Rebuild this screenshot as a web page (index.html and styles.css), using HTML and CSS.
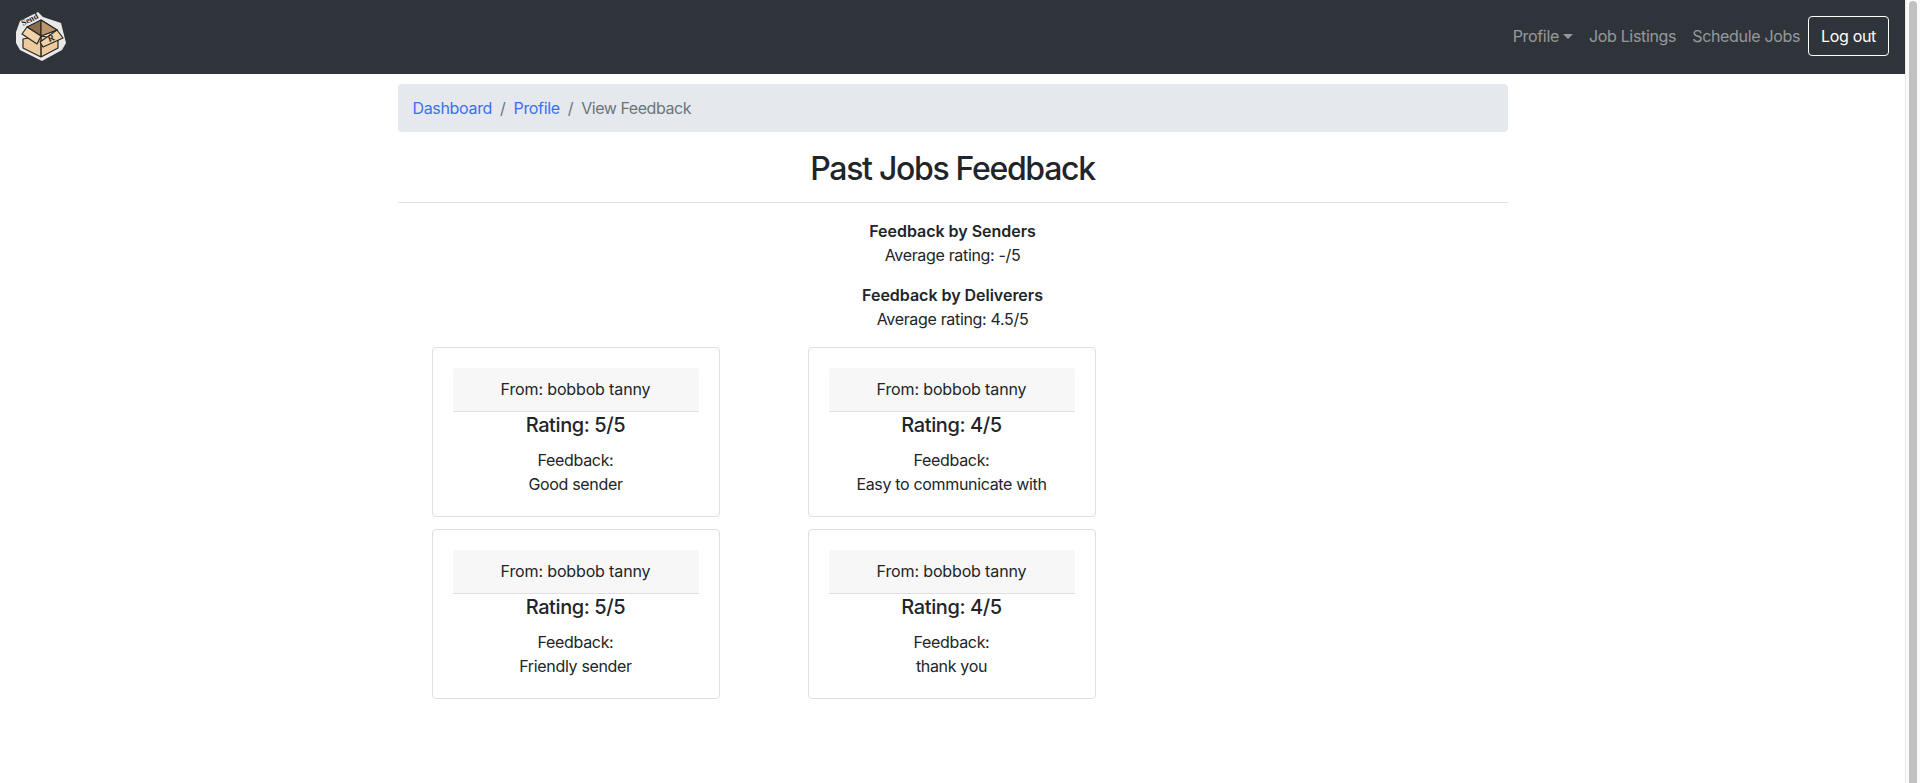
FILE: index.html
```html
<!DOCTYPE html>
<html lang="en">
<head>
<meta charset="utf-8">
<title>Past Jobs Feedback</title>
<link rel="stylesheet" href="styles.css">
</head>
<body>
<nav class="navbar">
  <a class="brand" href="#">
    <svg class="logo" viewBox="16 9 50 54" width="50" height="54" aria-hidden="true">
      <path d="M16 32 L20 21 L38 12 L43 17 L61 23 L66 43 L62 50 L42 61 L20 50 L16 43 Z" fill="#e9e9e9"/>
      <path d="M27 27 L41 20 L57 30 L41 36 Z" fill="#8a6c4a" stroke="#2a2522" stroke-width="1.2" stroke-linejoin="round"/>
      <path d="M41 20 L41 36" fill="none" stroke="#2a2522" stroke-width="1.2"/>
      <path d="M41 20 L57 30 L41 36 Z" fill="#b8976c" stroke="#2a2522" stroke-width="1.2" stroke-linejoin="round"/>
      <path d="M23 39 L23 48 L41 57 L58 48 L58 39 L41 36 Z" fill="#eccb9f" stroke="#2a2522" stroke-width="1.2" stroke-linejoin="round"/>
      <path d="M41 36 L41 57" fill="none" stroke="#2a2522" stroke-width="1.5"/>
      <path d="M22 34 L27 27 L41 36 L37 44 Z" fill="#f0d3a9" stroke="#2a2522" stroke-width="1.2" stroke-linejoin="round"/>
      <path d="M40 42 L43 47 L63 38 L57 30 Z" fill="#f0d3a9" stroke="#2a2522" stroke-width="1.2" stroke-linejoin="round"/>
      <text class="logo-send" x="23" y="26" transform="rotate(-27 23 26)">Send</text>
      <text class="logo-r" x="49" y="42" transform="rotate(-20 49 42)">R</text>
    </svg>
  </a>
  <ul class="nav">
    <li><a class="nav-link dropdown" href="#">Profile</a></li>
    <li><a class="nav-link" href="#">Job Listings</a></li>
    <li><a class="nav-link" href="#">Schedule Jobs</a></li>
    <li><a class="btn-logout" href="#">Log out</a></li>
  </ul>
</nav>
<main class="container">
  <ol class="breadcrumb">
    <li><a href="#">Dashboard</a></li>
    <li class="sep">/</li>
    <li><a href="#">Profile</a></li>
    <li class="sep">/</li>
    <li class="current">View Feedback</li>
  </ol>
  <h1 class="title">Past Jobs Feedback</h1>
  <hr class="rule">
  <section class="summary">
    <p><strong>Feedback by Senders</strong><br>Average rating: -/5</p>
    <p><strong>Feedback by Deliverers</strong><br>Average rating: 4.5/5</p>
  </section>
  <div class="cards">
    <article class="card">
      <div class="card-header">From: bobbob tanny</div>
      <h5 class="rating">Rating: 5/5</h5>
      <p class="feedback">Feedback:<br>Good sender</p>
    </article>
    <article class="card">
      <div class="card-header">From: bobbob tanny</div>
      <h5 class="rating">Rating: 4/5</h5>
      <p class="feedback">Feedback:<br>Easy to communicate with</p>
    </article>
    <article class="card">
      <div class="card-header">From: bobbob tanny</div>
      <h5 class="rating">Rating: 5/5</h5>
      <p class="feedback">Feedback:<br>Friendly sender</p>
    </article>
    <article class="card">
      <div class="card-header">From: bobbob tanny</div>
      <h5 class="rating">Rating: 4/5</h5>
      <p class="feedback">Feedback:<br>thank you</p>
    </article>
  </div>
</main>
<div class="scrollbar"><div class="thumb"></div></div>
</body>
</html>
```
FILE: styles.css
```css
* { box-sizing: border-box; }
html, body { margin: 0; height: 100%; overflow: hidden; }
body {
  padding-right: 15px;
  font-family: Inter, "Liberation Sans", sans-serif;
  font-size: 16px;
  line-height: 24px;
  letter-spacing: -0.33px;
  color: #212529;
  background: #fff;
}
a { text-decoration: none; }
.navbar {
  height: 74px;
  background: #2e3439;
  display: flex;
  align-items: flex-start;
  justify-content: space-between;
  padding: 0 16px;
}
.brand { display: flex; }
.logo { display: block; margin-top: 9px; }
.logo-send { font: 700 8.5px "Liberation Serif", serif; letter-spacing: 0; fill: #1c1c1c; }
.logo-r { font: 700 9px "Liberation Serif", serif; letter-spacing: 0; fill: #2a2522; }
.nav { display: flex; align-items: center; list-style: none; margin: 16px 0 0; padding: 0; }
.nav-link { display: block; padding: 8px; color: rgba(255,255,255,.5); }
.dropdown::after {
  content: "";
  display: inline-block;
  margin-left: 4px;
  vertical-align: 3px;
  border-top: 5px solid;
  border-left: 5px solid transparent;
  border-right: 5px solid transparent;
}
.btn-logout {
  display: block;
  padding: 7px 12px;
  border: 1px solid #fff;
  border-radius: 4px;
  color: #fff;
}
.container { width: 1140px; margin: 0 auto; padding: 10px 15px 0; }
.breadcrumb {
  display: flex;
  list-style: none;
  margin: 0 0 16px;
  padding: 12px 15px;
  background: #e5e8ed;
  border-radius: 4px;
}
.breadcrumb a { color: #3a70f0; }
.sep { padding: 0 8px; color: #6c757d; }
.current { color: #6c757d; letter-spacing: -0.45px; }
.title {
  margin: 0;
  padding-top: 2px;
  padding-bottom: 1px;
  font-size: 32px;
  font-weight: 450;
  line-height: 38px;
  letter-spacing: -1.32px;
  text-align: center;
}
.rule { margin: 13px 0 16px; border: 0; border-top: 1px solid #e0e1e3; }
.summary { text-align: center; }
.summary p { margin: 0 0 16px; }
.summary strong { font-weight: 600; letter-spacing: -0.02px; }
.cards {
  display: grid;
  grid-template-columns: repeat(2, 288px);
  column-gap: 88px;
  row-gap: 12px;
  padding-left: 34px;
}
.card {
  height: 170px;
  padding: 20px;
  border: 1px solid #dfdfdf;
  border-radius: 4px;
  text-align: center;
}
.card-header {
  height: 44px;
  padding: 9px 10px;
  background: #f7f7f7;
  border-bottom: 1px solid #dfdfdf;
  border-radius: 3px 3px 0 0;
  letter-spacing: -0.14px;
}
.rating {
  margin: 1px 0 11px;
  font-size: 20px;
  font-weight: 450;
  line-height: 24px;
  letter-spacing: -0.4px;
}
.feedback { margin: 0; }
.scrollbar {
  position: fixed;
  top: 0; right: 0; bottom: 0;
  width: 15px;
  background: #fafafa;
  border-left: 1px solid #e8e8e8;
  padding: 1px 3px 0;
  overflow: hidden;
}
.thumb { height: 100%; background: #c1c1c1; border-radius: 4px 4px 0 0; }
```
